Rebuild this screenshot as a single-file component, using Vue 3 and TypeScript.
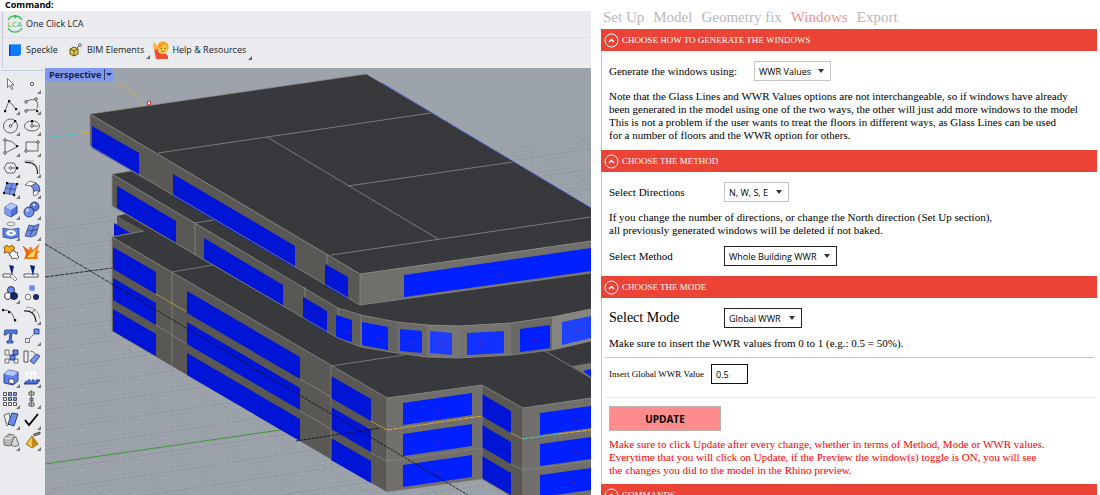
<script setup lang="ts">
import { ref } from 'vue'

interface Tool { name: string; art: string; more?: boolean }
interface Shape { fill: string; points: string }

const tabs = ['Set Up', 'Model', 'Geometry fix', 'Windows', 'Export']
const activeTab = ref('Windows')
const source = ref('WWR Values')
const directions = ref('N, W, S, E')
const method = ref('Whole Building WWR')
const mode = ref('Global WWR')
const ratio = ref('0.5')

const line = 'fill="none" stroke="#555" stroke-width=".9"'
const dot = (x: number, y: number, r = 1.3) => `<circle cx="${x}" cy="${y}" r="${r}" fill="#fff" stroke="#333"/>`
const node = (x: number, y: number) => `<rect x="${x - 1}" y="${y - 1}" width="2.2" height="2.2" fill="#111"/>`

const tools: Tool[] = [
  { name: 'Select', art: '<path d="M6.500 5.500v9l2.200-2 1.800 4 1.500-.8-1.800-3.700h2.800z" fill="#fff" stroke="#555"/>' },
  { name: 'Point', more: true, art: dot(10, 11, 1.6) },
  { name: 'Polyline', more: true, art: `<path d="M4 17 8 7l7 8" ${line}/>${node(4, 17)}${node(8, 7)}${node(15, 15)}` },
  { name: 'Curve', more: true, art: `<path d="M4 7c4-1 9-3 11 1s0 8-3 8H4" ${line}/>${dot(4, 8)}${dot(14, 5)}${dot(4, 17)}${node(15, 17)}` },
  { name: 'Circle', more: true, art: `<circle cx="9.500" cy="11" r="7" ${line}/><path d="m9.500 11 5-5" ${line}/>${dot(9.5, 11)}${node(14, 6)}` },
  { name: 'Ellipse', more: true, art: `<ellipse cx="10" cy="11" rx="7.500" ry="5" ${line}/><path d="M10 11V6M10 11h6" ${line}/>${dot(10, 11)}${node(10, 6)}` },
  { name: 'Arc', more: true, art: `<path d="M4 17V4q9 1 12 7L4 17" ${line}/>${dot(4, 4)}${dot(4, 17)}${node(16, 10)}` },
  { name: 'Rectangle', more: true, art: `<path d="M4 6h12v9H4z" ${line}/>${dot(4, 15)}${dot(16, 6)}` },
  { name: 'Polygon', more: true, art: `<path d="M3 11l3-5h7l3 5-3 5H6zM10 11h6" ${line}/>${dot(9.5, 11)}${node(16, 11)}` },
  { name: 'Fillet', more: true, art: '<path d="M3 5.500q13-1 12.500 11.500" fill="none" stroke="#222" stroke-width="1.200"/><path d="M2 4h10M17.500 8v9" stroke="#888"/>' },
  { name: 'Surface', more: true, art: `<path d="m6 5 10 1-3 11-10-2z" fill="#7892e8" stroke="#3a4a8c"/><path d="m11 5.500-3 11M4.500 10l10 1.500" stroke="#3a4a8c"/>${node(6, 5)}${node(16, 6)}${node(3, 15)}${node(13, 17)}` },
  { name: 'Sweep', more: true, art: '<path d="m9 8 5-3q4 2 4 8l-6 3q0-6-3-8z" fill="#6f8de5" stroke="#26306c"/><path d="m3 7 5-4 6 2-5 3z" fill="#fff" stroke="#555"/><path d="m11 14 5-2v4l-4 2z" fill="#fff" stroke="#555"/>' },
  { name: 'Box', more: true, art: '<path d="m4 8 6-4 6 3v7l-6 4-6-3z" fill="#4c6fdd" stroke="#1c2d78"/><path d="m4 8 6 3 6-4-6-3z" fill="#b9c8fa"/><path d="m4 8 6 3v7l-6-3z" fill="#7d99ef"/>' },
  { name: 'Boolean', more: true, art: '<circle cx="12.500" cy="7.500" r="4.500" fill="#5877d8" stroke="#182764"/><circle cx="7" cy="13" r="5" fill="#6f8cf0" stroke="#182764"/><circle cx="5.500" cy="11" r="1.500" fill="#d2dcff"/><circle cx="12" cy="6" r="1.300" fill="#d2dcff"/>' },
  { name: 'Projection', more: true, art: '<path d="M2 8q8 3 16 0v9q-8 3-16 0z" fill="#5c80e6" stroke="#2b4697"/><ellipse cx="10" cy="4" rx="4" ry="2" fill="none" stroke="#777"/><ellipse cx="10" cy="13" rx="5" ry="3" fill="#fff"/><ellipse cx="10" cy="13" rx="2" ry="1" fill="#7794e8"/>' },
  { name: 'Mesh', more: true, art: '<path d="m7 5 5 1 5-2-3 11-5 2-6-1z" fill="#6f8de5" stroke="#35437e"/><path d="m12 6-4 10M5 10l5 1 6-2" stroke="#35437e" fill="none"/>' },
  { name: 'Join', art: '<path d="M3 6 6 4l2 2 3-2 3 3-2 2 2 4-3-1-2 2-2-3-4 1 1-3z" fill="#f9a91e" stroke="#6a4708"/><path d="m10 11 3-2 1 2 3 1-1 2 2 2-2 2-3-1-2 1-1-3-2-1z" fill="#fff" stroke="#333"/>' },
  { name: 'Explode', art: '<path d="m1 5 6 4 1-4 3 4 7-7-3 8 3 0-3 3 1 5H2l2-5z" fill="#f17b18"/><path d="m5 16 9-8-2 8z" fill="#ffd365"/><path d="m1 5 5 6-2 6" stroke="#b63f0a" fill="none"/>' },
  { name: 'Trim', art: '<path d="M2 12h9v3H2z" fill="#fff" stroke="#333"/><path d="m11 12 5 5-2 2-5-5z" fill="#eee" stroke="#777"/><path d="m8 3 5 1-2 9z" fill="#0b237d"/>' },
  { name: 'Split', art: '<path d="M2 12h14v3H2z" fill="#fff" stroke="#333"/><path d="m8 3 5 1-2 10z" fill="#0b237d"/>' },
  { name: 'Group', more: true, art: '<circle cx="10" cy="7" r="3.500" fill="#6c8dff" stroke="#111"/><circle cx="7" cy="13" r="3.500" fill="#fff" stroke="#111"/><circle cx="13" cy="13" r="3.500" fill="#14286f" stroke="#111"/>' },
  { name: 'Ungroup', art: '<circle cx="10" cy="5" r="3" fill="#6c8df4"/><circle cx="6" cy="14" r="2.800" fill="#fff" stroke="#555"/><circle cx="14" cy="14" r="3" fill="#14286f"/>' },
  { name: 'Extend', art: `<path d="M2 6q10-1 12 12" fill="none" stroke="#333"/>${node(2, 6)}${node(8, 8)}${node(14, 16)}` },
  { name: 'Offset', more: true, art: '<path d="M2 7q11-1 12 11" fill="none" stroke="#222" stroke-width="1.200"/><path d="M4 3q12 0 14 12" fill="none" stroke="#888"/><path d="m10 9 3-4" stroke="#333"/>' },
  { name: 'Text', art: '<path d="M4 5h12v4h-2l-1-1h-2l-1 8h2v2H6v-2h2l1-8H7l-2 2H3z" fill="#5479df" stroke="#173982"/>' },
  { name: 'Scale', more: true, art: '<path d="M12 4h5v5h-5z" fill="#6b8ef3" stroke="#172b72"/><path d="M3.500 13.500h4v4h-4z" fill="#eee" stroke="#555"/><path d="m8 13 4-4" stroke="#333" stroke-dasharray="2 1"/>' },
  { name: 'Array', art: '<path d="M4 4h4v5H4zM4 13h4v4H4zM13 13h4v4h-4z" fill="#eee" stroke="#555"/><path d="M12 4h5v5h-5zM9 9h5v5H9z" fill="#6083e8" stroke="#172b72"/>' },
  { name: 'Orient', art: '<path d="M2 5h4v11H2z" fill="#eee" stroke="#333"/><path d="m8 15 6-7 4 2-6 8z" fill="#7193f0" stroke="#243676"/><path d="M8 5q4 0 5 3" stroke="#555" fill="none"/>' },
  { name: 'Solid', more: true, art: '<path d="m3 7 5-4 9 2v9l-5 4-9-2z" fill="#5f83ea" stroke="#14266d"/><path d="m3 7 9 2 5-4-9-2z" fill="#b8c8ff"/><path d="M8 12h5v5l-5-1z" fill="#fff" stroke="#333"/>' },
  { name: 'Extrude', more: true, art: '<path d="m5 13 13 0-3 4H2z" fill="#496cdd" stroke="#14235f"/><path d="M5 14V5M9 14V5M13 14V5m-9.500 2L5 4.500 6.500 7M7.500 7 9 4.500 10.500 7M11.500 7 13 4.500 14.500 7" stroke="#fff" stroke-width="1.200" fill="none"/>' },
  { name: 'Rectangular array', more: true, art: '<g fill="#eee" stroke="#333"><path d="M2.500 4.500h3v3h-3zM2.500 9.500h3v3h-3zM2.500 14.500h3v3h-3zM7.500 14.500h3v3h-3zM12.500 14.500h3v3h-3z"/><path fill="#7d9bf2" d="M7.500 4.500h3v3h-3zM12.500 4.500h3v3h-3zM7.500 9.500h3v3h-3zM12.500 9.500h3v3h-3z"/></g>' },
  { name: 'Align', more: true, art: '<path d="M7 4h5v3H7zM8 10h3v3H8zM7 15h5v3H7z" fill="#ddd" stroke="#333"/><path d="M9.500 2v17" stroke="#e52828"/>' },
  { name: 'Copy', more: true, art: '<path d="m3 6 5-2 2 9-4 4z" fill="#eee" stroke="#444"/><path d="m11 4 6 1-4 12-6-2z" fill="#6c8cea" stroke="#172762"/>' },
  { name: 'Check', more: true, art: '<path d="M3 11 7 16 16 5" fill="none" stroke="#050505" stroke-width="1.800"/>' },
  { name: 'Primitives', more: true, art: '<path d="m3 8 5-4 5 1v9l-5 2-5-1z" fill="#b7b9bb" stroke="#555"/><path d="m10 15 3-8h2l3 8q-4 3-8 0z" fill="#d6d7d8" stroke="#555"/><path d="m3 8 5 1 5-4" stroke="#fff" fill="none"/>' },
  { name: 'Pyramid', more: true, art: '<path d="m4 14 6-8 6 8-6 4z" fill="#f3c24a" stroke="#75520c"/><path d="m10 6v12l6-4z" fill="#c38a16"/><path d="m12 4 6-2v2l-6 2z" fill="#999" stroke="#333"/>' },
]

const side = '#5a5855'
const front = '#716f6c'
const roof = '#38393c'
const shadeBlue = '#0015d6'
const blue = '#0020ff'

const lowerWalls: Shape[] = [
  { fill: roof, points: '117,216 130,213 200,250 200,280 144,232' },
  { fill: side, points: '117,216 144,231 117,236' },
  { fill: shadeBlue, points: '114,223 130,233 114,236' },
  { fill: roof, points: '112,237 144,231 260,262 430,330 591,330 591,398 523,408 482,385 387,398' },
  { fill: side, points: '112,237 387,398 387,492 112,331' },
  { fill: front, points: '387,398 482,385 482,479 387,492' },
  { fill: side, points: '482,385 523,408 523,503 482,479' },
  { fill: front, points: '523,408 591,398 591,495 523,503' },
  { fill: '#777572', points: '572,366 591,363 591,378' },
  { fill: blue, points: '583,371 591,369 591,377' },
]

/* Parallelogram windows that repeat on the three lower storeys: x1, y1, x2, y2, height */
const bays: [number, number, number, number, number, string][] = [
  [113, 247, 156, 272, 22, shadeBlue],
  [187, 291, 300, 357, 22, shadeBlue],
  [331, 376, 371, 399, 22, shadeBlue],
  [403, 403, 472, 393, 22, blue],
  [482, 394, 511, 411, 22, shadeBlue],
  [540, 413, 591, 406, 22, blue],
]
const storeyWindows: Shape[] = [0, 31, 62].flatMap((d) =>
  bays.map(([x1, y1, x2, y2, h, fill]) => ({
    fill,
    points: `${x1},${y1 + d} ${x2},${y2 + d} ${x2},${y2 + d + h} ${x1},${y1 + d + h}`,
  })),
)

const middle: Shape[] = [
  { fill: roof, points: '112,174 131,171 360,290 591,260 591,309 552,317 511,323 459,326 427,325 397,322 361,315 338,308' },
  { fill: side, points: '112,174 338,308 338,338 112,206' },
  { fill: '#62605d', points: '338,308 361,315 361,347 338,338' },
  { fill: '#646360', points: '361,315 397,322 397,353 361,347' },
  { fill: '#6b6a67', points: '397,322 427,325 427,357 397,353' },
  { fill: '#777673', points: '427,325 459,326 459,358 427,357' },
  { fill: '#747370', points: '459,326 511,323 511,355 459,358' },
  { fill: '#696865', points: '511,323 552,317 552,350 511,355' },
  { fill: '#858481', points: '552,317 591,309 591,341 552,350' },
  { fill: shadeBlue, points: '117,186 176,221 176,243 117,208' },
  { fill: shadeBlue, points: '204,238 283,285 283,306 204,259' },
  { fill: shadeBlue, points: '303,297 327,311 327,333 303,318' },
  { fill: '#001bf0', points: '336,315 352,320 352,342 336,338' },
  { fill: blue, points: '362,322 388,327 388,350 362,345' },
  { fill: '#0828ff', points: '400,329 422,331 422,353 400,351' },
  { fill: '#1f3cff', points: '430,331 452,333 452,355 430,353' },
  { fill: '#1230ff', points: '467,333 504,331 504,353 467,355' },
  { fill: blue, points: '520,329 550,325 550,348 520,352' },
  { fill: '#1f42ff', points: '562,322 591,316 591,338 562,345' },
]

const upper: Shape[] = [
  { fill: roof, points: '90,114 366,74 591,208 591,241 360,274' },
  { fill: side, points: '90,114 360,274 360,305 90,146' },
  { fill: front, points: '360,274 591,241 591,273 360,305' },
  { fill: shadeBlue, points: '92,126 139,153 139,175 92,148' },
  { fill: shadeBlue, points: '173,174 295,246 295,268 173,196' },
  { fill: shadeBlue, points: '325,264 348,277 348,299 325,286' },
  { fill: blue, points: '404,275 591,248 591,271 404,297' },
]

const marks = [
  [349, 332], [378, 338], [412, 343], [443, 345], [483, 345], [535, 340], [579, 331],
  [438, 410], [438, 442], [438, 473], [575, 420], [575, 452], [575, 483], [501, 275],
]
const faintMarks = [
  [144, 212], [115, 142], [232, 219], [239, 270], [315, 314], [493, 406], [493, 443],
  [240, 333], [240, 364], [242, 397], [346, 397], [130, 330], [134, 270],
]

const rows = Array.from({ length: 120 }, (_, i) => 130 + i * 4)
const diagonals = Array.from({ length: 110 }, (_, i) => -300 + i * 8)
</script>

<template>
  <main class="app">
    <section class="modeler">
      <div class="command">Command:</div>
      <nav class="bar" aria-label="Assessment">
        <button class="bar-item" type="button">
          <svg width="18" height="18" viewBox="0 0 18 18" fill="none" stroke="#35bd58">
            <path d="M2 5a8 8 0 0 1 14 0M2 13a8 8 0 0 0 14 0" stroke-width="1.300" />
            <path d="m8 0 3 1.500L8 3" fill="#35bd58" />
            <text x="9" y="12" text-anchor="middle" fill="#35bd58" stroke="none" class="logo-text">LCA</text>
          </svg>
          One Click LCA
        </button>
      </nav>
      <nav class="bar bar-second" aria-label="Plugins">
        <button class="bar-item" type="button">
          <svg width="18" height="18" viewBox="0 0 18 18"><path d="m3 4 2-1h10v10l-2 2H3z" fill="#0b7cff" /><path d="M3 4h1.500v11H3z" fill="#1237c7" /><path d="M3 4 5 3h10v1z" fill="#53a5ff" /></svg>
          Speckle
        </button>
        <button class="bar-item bim" type="button">
          <svg width="18" height="18" viewBox="0 0 18 18"><path d="m3 8 4-2 4 2v5l-4 2-4-2z" fill="#e8cf45" stroke="#5c552c" /><path d="m3 8 4 2 4-2M7 10v5" stroke="#5c552c" fill="none" /><circle cx="13" cy="4" r="1.500" fill="#ddd" stroke="#777" /><path d="m10 7 2-2" stroke="#555" /></svg>
          BIM Elements
          <svg class="corner" width="4" height="4" viewBox="0 0 4 4"><path d="M4 0v4H0z" fill="#666" /></svg>
        </button>
        <button class="bar-item help" type="button">
          <svg width="17" height="19" viewBox="0 0 17 19">
            <path d="M3 18 1 8l3-2 2 6h6l3 3v3z" fill="#ef502f" />
            <path d="M1 1 4 5l0 4H1L0 4z" fill="#ffb62e" />
            <circle cx="10" cy="6" r="5.500" fill="#f5a01f" />
            <path d="M6 7q4-1 5-4 3 1 3 4 0 6-4 6t-4-6z" fill="#ffcf45" />
            <circle cx="8.500" cy="7.500" r=".7" fill="#6a3a12" /><circle cx="12" cy="7.500" r=".7" fill="#6a3a12" />
            <path d="M8.500 10q2 1 3 0" fill="none" stroke="#b34a17" />
          </svg>
          Help &amp; Resources
          <svg class="corner" width="4" height="4" viewBox="0 0 4 4"><path d="M4 0v4H0z" fill="#666" /></svg>
        </button>
      </nav>

      <div class="workspace">
        <div class="tools">
          <button v-for="tool in tools" :key="tool.name" class="tool" type="button" :aria-label="tool.name">
            <svg width="21" height="21" viewBox="0 0 21 21">
              <g stroke-width=".8" v-html="tool.art" />
              <path v-if="tool.more" d="M19 17v4h-4z" fill="#777" />
            </svg>
          </button>
        </div>

        <div class="viewport">
          <svg class="scene" viewBox="45 68 546 427" preserveAspectRatio="xMinYMin slice" aria-label="Building model">
            <defs>
              <clipPath id="ground"><path d="M45 214 112 204 480 151 591 134V495H45z" /></clipPath>
            </defs>
            <path d="M45 68h546v427H45z" fill="#9ca3aa" />
            <g clip-path="url(#ground)" fill="none">
              <path v-for="(y, i) in rows" :key="'r' + y" :d="`M45 ${y + 40}l546-81`" :stroke="i % 5 ? '#949ba3' : '#888d96'" stroke-width=".7" stroke-dasharray="5 2" />
              <path v-for="(y, i) in diagonals" :key="'d' + y" :d="`M45 ${y}l546 325`" :stroke="i % 5 ? '#979ea5' : '#888d94'" stroke-width=".6" stroke-dasharray="2 1" />
            </g>
            <path d="m45 464 235-34" stroke="#3f963f" fill="none" />
            <path d="m45 277 67-9M45 244l67 40" stroke="#111" stroke-width=".8" stroke-dasharray="4 1" fill="none" />

            <polygon v-for="(s, i) in lowerWalls" :key="'l' + i" :points="s.points" :fill="s.fill" />
            <polygon v-for="(s, i) in storeyWindows" :key="'w' + i" :points="s.points" :fill="s.fill" />
            <g fill="none" stroke="#858480" stroke-width=".8">
              <path d="M144 231 112 237 387 398l95-13 41 23 68-10M112 237v94M172 272v94M172 272l41-7M331 366v94M331 366l73-11M387 398v94l95-13v-94M523 408v87M545 351l46 27" />
              <path d="m156 325 31 19M300 379l31 18M300 411l31 18M371 453l16 8 95-13M511 464l12 6 68-9" />
            </g>
            <g fill="none" stroke="#d8b036">
              <path d="m156 294 31 18M371 421l16 9M511 433l12 6" stroke-dasharray="2 1" />
              <path d="m387 430 95-14M558 434l33-4" stroke-dasharray="5 1" />
            </g>
            <path d="m523 439 35-5" stroke="#35cbd0" stroke-dasharray="5 1" />
            <path d="m112 284 356 211M296 441l84-13" stroke="#0b0b10" stroke-width=".8" stroke-dasharray="3 1" fill="none" />

            <polygon v-for="(s, i) in middle" :key="'m' + i" :points="s.points" :fill="s.fill" />
            <path d="M131 171 112 174v32l226 132 23 9 36 6 30 4 32 1 52-3 41-5 39-9M112 174l226 134 23 7 36 7 30 3 32 1 52-3 41-6 39-8M195 223v32M195 223l19-3M305 287v10M338 308v7M361 315v32" fill="none" stroke="#8b8a86" stroke-width=".8" />

            <polygon v-for="(s, i) in upper" :key="'u' + i" :points="s.points" :fill="s.fill" />
            <g fill="none" stroke="#8d8c88" stroke-width=".8">
              <path d="M366 74 90 114v32l270 159 231-32M90 114l270 160 231-33M360 274v31M327 255v9" />
              <path d="m158 153 273-40M267 137l171 102M348 186l165-24M331 255l260-38" />
            </g>
            <path d="m382 83 209 125" fill="none" stroke="#2e43d8" stroke-dasharray="2 1" />
            <g fill="none" stroke="#9c1740" stroke-width=".8">
              <path v-for="([x, y], i) in marks" :key="'k' + i" :d="`M${x - 3} ${y - 1}l3 1 3 1`" opacity=".75" />
              <path v-for="([x, y], i) in faintMarks" :key="'f' + i" :d="`M${x - 1} ${y}l2 1`" opacity=".5" />
            </g>
            <path d="m110 79 23 14 11 13M82 133l7-1" fill="none" stroke="#dfb23b" stroke-dasharray="3 1" />
            <path d="m45 138 37-5" stroke="#38cbd2" stroke-dasharray="5 2" />
            <circle cx="149" cy="103" r="1.800" fill="#fff" stroke="#ef2020" />
          </svg>
          <button class="view-title" type="button">
            <span>Perspective</span>
            <svg width="9" height="13" viewBox="0 0 9 13"><path d="M.5 1v11" stroke="#343c68" /><path d="M2 5h6L5 8z" fill="#222a4e" /></svg>
          </button>
        </div>
      </div>
    </section>

    <aside class="panel">
      <nav class="tabs" aria-label="Steps">
        <a v-for="tab in tabs" :key="tab" href="#" :class="{ active: tab === activeTab }" @click.prevent="activeTab = tab">{{ tab }}</a>
      </nav>

      <section class="group">
        <h2><button type="button"><svg width="15" height="15" viewBox="0 0 15 15"><circle cx="7.500" cy="7.500" r="6.500" /><path d="M5 9l2.500-2.500L10 9" stroke-width="1.500" /></svg>CHOOSE HOW TO GENERATE THE WINDOWS</button></h2>
        <div class="body source">
          <div class="field wide">
            <label for="source">Generate the windows using:</label>
            <span class="picker w-source"><select id="source" v-model="source"><option>WWR Values</option><option>Glass Lines</option></select><svg width="6" height="4" viewBox="0 0 6 4"><path d="M0 0h6L3 4z" /></svg></span>
          </div>
          <p>Note that the Glass Lines and WWR Values options are not interchangeable, so if windows have already<br>been generated in the model using one of the two ways, the other will just add more windows to the model<br>This is not a problem if the user wants to treat the floors in different ways, as Glass Lines can be used<br>for a number of floors and the WWR option for others.</p>
        </div>
      </section>

      <section class="group">
        <h2><button type="button"><svg width="15" height="15" viewBox="0 0 15 15"><circle cx="7.500" cy="7.500" r="6.500" /><path d="M5 9l2.500-2.500L10 9" stroke-width="1.500" /></svg>CHOOSE THE METHOD</button></h2>
        <div class="body">
          <div class="field">
            <label for="directions">Select Directions</label>
            <span class="picker w-directions"><select id="directions" v-model="directions"><option>N, W, S, E</option></select><svg width="6" height="4" viewBox="0 0 6 4"><path d="M0 0h6L3 4z" /></svg></span>
          </div>
          <p>If you change the number of directions, or change the North direction (Set Up section),<br>all previously generated windows will be deleted if not baked.</p>
          <div class="field">
            <label for="method">Select Method</label>
            <span class="picker dark w-method"><select id="method" v-model="method"><option>Whole Building WWR</option></select><svg width="6" height="4" viewBox="0 0 6 4"><path d="M0 0h6L3 4z" /></svg></span>
          </div>
        </div>
      </section>

      <section class="group">
        <h2><button type="button"><svg width="15" height="15" viewBox="0 0 15 15"><circle cx="7.500" cy="7.500" r="6.500" /><path d="M5 9l2.500-2.500L10 9" stroke-width="1.500" /></svg>CHOOSE THE MODE</button></h2>
        <div class="body mode">
          <div class="field large">
            <label for="mode">Select Mode</label>
            <span class="picker dark w-mode"><select id="mode" v-model="mode"><option>Global WWR</option></select><svg width="6" height="4" viewBox="0 0 6 4"><path d="M0 0h6L3 4z" /></svg></span>
          </div>
          <p>Make sure to insert the WWR values from 0 to 1 (e.g.: 0.5 = 50%).</p>
          <div class="field ratio">
            <label for="ratio">Insert Global WWR Value</label>
            <input id="ratio" v-model="ratio" type="text" inputmode="decimal">
          </div>
          <button class="update" type="button">UPDATE</button>
          <p class="warning">Make sure to click Update after every change, whether in terms of Method, Mode or WWR values.<br>Everytime that you will click on Update, if the Preview the window(s) toggle is ON, you will see<br>the changes you did to the model in the Rhino preview.</p>
        </div>
      </section>

      <section class="group">
        <h2><button type="button"><svg width="15" height="15" viewBox="0 0 15 15"><circle cx="7.500" cy="7.500" r="6.500" /><path d="M5 9l2.500-2.500L10 9" stroke-width="1.500" /></svg>COMMANDS</button></h2>
      </section>
    </aside>
  </main>
</template>

<style>
body {
  margin: 0;
  overflow: hidden;
}
</style>

<style scoped>
.app {
  display: grid;
  grid-template-columns: 591fr 509fr;
  height: 100vh;
  overflow: hidden;
  background: #fff;
  font-family: "Open Sans", "Noto Sans", sans-serif;
  font-size: 9px;
  color: #1c1c1c;
}
* {
  box-sizing: border-box;
}
button,
input,
select {
  font: inherit;
  color: inherit;
}
button {
  padding: 0;
  border: 0;
  background: none;
}
svg {
  display: block;
  flex: none;
}
.modeler {
  display: flex;
  flex-direction: column;
  min-width: 0;
  min-height: 0;
  background: #e9ebef;
}
.command {
  height: 11px;
  padding-left: 5px;
  background: #fff;
  color: #000;
  font-weight: 700;
  line-height: 10px;
}
.bar {
  display: flex;
  align-items: center;
  height: 27px;
  margin-left: 2px;
  padding-left: 3px;
  border-left: 1px solid #c8ccdc;
  border-bottom: 1px solid #dcdfe6;
}
.bar-second {
  height: 30px;
  padding-bottom: 6px;
  border-bottom: 0;
}
.bar-item {
  display: flex;
  align-items: center;
  gap: 2px;
  line-height: 18px;
}
.corner {
  align-self: flex-end;
}
.bim {
  margin-left: 9px;
}
.help {
  margin-left: 3px;
}
.logo-text {
  font-size: 8px;
}
.workspace {
  display: grid;
  grid-template-columns: 45px 1fr;
  flex: 1;
  min-height: 0;
}
.tools {
  display: grid;
  grid-template-columns: 21px 21px;
  grid-auto-rows: 21px;
  align-content: start;
  margin: 2px 1px 0;
  padding-top: 2px;
  border-top: 1px solid #c3cddd;
}
.viewport {
  position: relative;
  min-height: 0;
  overflow: hidden;
  background: #9ca3aa;
}
.scene {
  width: 100%;
  height: 100%;
}
.view-title {
  position: absolute;
  top: 0;
  left: 0;
  display: flex;
  align-items: center;
  gap: 3px;
  height: 13px;
  padding-left: 4px;
  background: #8098ed;
  color: #1b2145;
  font-weight: 700;
}
.panel {
  min-width: 0;
  padding: 8px 3px 0 10px;
  overflow: hidden;
  font-family: "Liberation Serif", "Times New Roman", serif;
  color: #000;
}
.tabs {
  display: flex;
  gap: 9px;
  height: 21px;
  padding-left: 2px;
  font-size: 15px;
  line-height: 18px;
}
.tabs a {
  color: #b8b8b8;
  text-decoration: none;
  white-space: nowrap;
}
.tabs .active {
  color: #ee8e8b;
}
h2 {
  margin: 0;
  background: #eb4335;
  color: #fff;
  font-size: 9px;
  font-weight: 400;
}
h2 button {
  display: flex;
  align-items: center;
  gap: 3px;
  width: 100%;
  height: 22px;
  padding-left: 3px;
}
h2 svg {
  fill: none;
  stroke: #fff;
}
.body {
  display: flex;
  flex-direction: column;
  gap: 9px;
  padding: 10px 3px 10px 7px;
  border-left: 1px solid #f7b5b0;
}
.body.source {
  padding-bottom: 8px;
}
.body.mode {
  padding-bottom: 7px;
}
.field {
  display: flex;
  align-items: center;
  height: 20px;
  font-size: 11px;
}
.field label {
  flex: 0 0 115px;
  white-space: nowrap;
}
.wide label {
  flex-basis: 145px;
}
.large {
  font-size: 14px;
}
.picker {
  position: relative;
  height: 20px;
}
.picker select {
  width: 100%;
  height: 100%;
  padding: 0 4px;
  border: 1px solid #c4c4c4;
  border-radius: 0;
  background: #fff;
  appearance: none;
  font-family: "Open Sans", "Noto Sans", sans-serif;
  font-size: 9px;
}
.dark select {
  border-color: #222;
}
.picker svg {
  position: absolute;
  top: 8px;
  right: 7px;
  fill: #333;
  pointer-events: none;
}
.w-source {
  width: 77px;
}
.w-directions {
  width: 65px;
}
.w-method {
  width: 113px;
}
.w-mode {
  width: 78px;
}
p {
  margin: 0;
  font-size: 11px;
  line-height: 13px;
  white-space: nowrap;
}
.field.ratio {
  height: 41px;
  margin: -2px 0 -1px -4px;
  padding: 0 0 7px 4px;
  border-top: 1px solid #c4c4c4;
  border-bottom: 1px solid #e6e6e6;
  font-size: 9px;
}
.ratio label {
  flex-basis: 102px;
}
.ratio input {
  width: 37px;
  height: 20px;
  padding: 0 4px;
  border: 1px solid #111;
  border-radius: 0;
  background: #fff;
  font-family: "Open Sans", "Noto Sans", sans-serif;
}
.update {
  width: 112px;
  height: 25px;
  border: 1px solid #bdb0b0;
  background: #ff8c8c;
  color: #000;
  font-family: "Open Sans", "Noto Sans", sans-serif;
  font-size: 10px;
  font-weight: 700;
}
.warning {
  margin-top: -2px;
  color: #f00;
}
</style>
